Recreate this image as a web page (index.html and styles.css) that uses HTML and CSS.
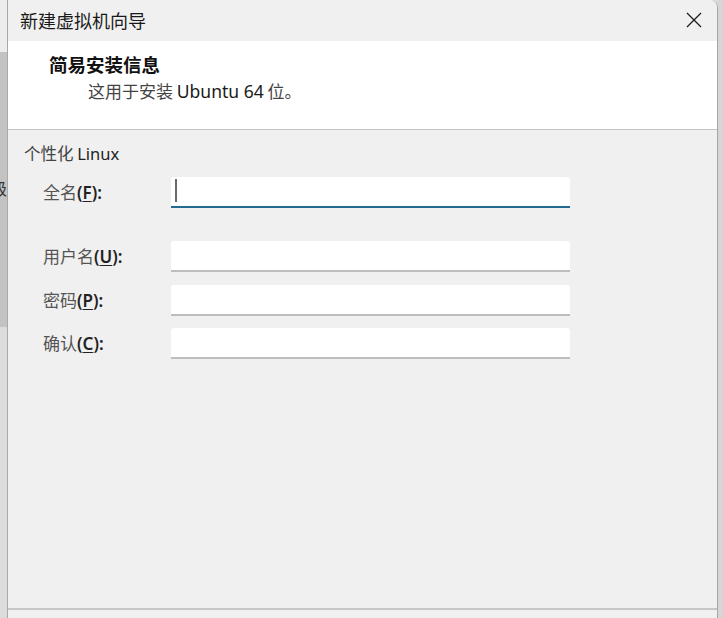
FILE: index.html
```html
<!DOCTYPE html>
<html lang="zh-CN">
<head>
<meta charset="utf-8">
<title>新建虚拟机向导</title>
<link rel="stylesheet" href="styles.css">
</head>
<body>
<div class="screen">
  <div class="behind-left">
    <div class="bl-top"></div>
    <div class="bl-mid"><span class="bl-glyph">级</span></div>
    <div class="bl-bottom"></div>
  </div>
  <div class="dialog">
    <div class="titlebar">
      <span class="title">新建虚拟机向导</span>
      <svg class="close" width="16" height="16" viewBox="0 0 16 16" aria-label="关闭">
        <path d="M1 1 L15 15 M15 1 L1 15" stroke="#1c1c1c" stroke-width="1.3" fill="none"/>
      </svg>
    </div>
    <div class="header">
      <div class="header-title">简易安装信息</div>
      <div class="header-sub">这用于安装 <span class="latin">Ubuntu 64</span> 位。</div>
    </div>
    <div class="body">
      <div class="section-title">个性化 <span class="latin">Linux</span></div>
      <div class="form">
        <div class="row row-first">
          <span class="label">全名<b>(<u>F</u>):</b></span>
          <div class="field focused"><span class="caret"></span></div>
        </div>
        <div class="row">
          <span class="label">用户名<b>(<u>U</u>):</b></span>
          <div class="field"></div>
        </div>
        <div class="row">
          <span class="label">密码<b>(<u>P</u>):</b></span>
          <div class="field"></div>
        </div>
        <div class="row">
          <span class="label">确认<b>(<u>C</u>):</b></span>
          <div class="field"></div>
        </div>
      </div>
    </div>
    <div class="footer"></div>
  </div>
  <div class="behind-right"></div>
</div>
</body>
</html>
```
FILE: styles.css
```css
html, body {
  margin: 0;
  padding: 0;
}
body {
  width: 723px;
  height: 618px;
  overflow: hidden;
  background: #dadada;
  font-family: "Noto Sans", "Noto Sans CJK SC", sans-serif;
  color: #1a1a1a;
}
.screen {
  display: flex;
  height: 618px;
}
.behind-left {
  width: 7px;
  display: flex;
  flex-direction: column;
  overflow: hidden;
  border-right: 1px solid #a9a9a9;
}
.bl-top {
  height: 52px;
  background: #ececec;
}
.bl-mid {
  height: 275px;
  background: #c3c3c3;
  position: relative;
}
.bl-glyph {
  position: absolute;
  top: 126px;
  right: 0;
  font-family: "Noto Sans CJK SC", sans-serif;
  font-size: 16px;
  line-height: 20px;
  color: #333;
}
.bl-bottom {
  flex: 1;
  background: #dcdcdc;
}
.dialog {
  width: 709px;
  display: flex;
  flex-direction: column;
  background: #f0f0f0;
  border-right: 1px solid #a6a6a6;
  border-top-right-radius: 8px;
  overflow: hidden;
}
.behind-right {
  flex: 1;
  background: #d6d6d6;
}
.titlebar {
  height: 41px;
  display: flex;
  align-items: center;
  justify-content: space-between;
  padding: 0 15px 0 12px;
  background: #f0f0f0;
}
.title {
  font-family: "Noto Sans CJK SC", sans-serif;
  font-size: 18px;
  color: #1a1a1a;
  line-height: 41px;
}
.close {
  display: block;
  margin-top: -2px;
}
.header {
  height: 89px;
  box-sizing: border-box;
  background: #ffffff;
  border-bottom: 1px solid #c4c4c4;
  padding: 11px 0 0 41px;
}
.header-title {
  font-family: "Noto Sans CJK SC", sans-serif;
  font-weight: 700;
  font-size: 18.5px;
  line-height: 25px;
  color: #111;
}
.header-sub {
  margin-top: 2px;
  padding-left: 39px;
  font-family: "Noto Sans CJK SC", sans-serif;
  font-size: 17px;
  line-height: 24px;
  color: #444;
}
.latin {
  font-family: "Noto Sans", sans-serif;
  font-size: 17.5px;
  color: #1a1a1a;
}
.body {
  flex: 1;
  padding: 12px 0 0 16px;
}
.section-title {
  font-family: "Noto Sans CJK SC", sans-serif;
  font-size: 16.5px;
  line-height: 22px;
  color: #444;
}
.section-title .latin {
  font-size: 16.5px;
  color: #222;
}
.form {
  margin-top: 12px;
  display: flex;
  flex-direction: column;
  gap: 12.5px;
  padding-left: 19px;
}
.row {
  display: flex;
  align-items: center;
  height: 31px;
}
.row-first {
  margin-bottom: 20.5px;
}
.label {
  width: 128px;
  font-family: "Noto Sans CJK SC", sans-serif;
  font-size: 17px;
  color: #555;
  line-height: 22px;
}
.label b {
  font-family: "Noto Sans", sans-serif;
  font-weight: 600;
  color: #222;
}
.label u {
  text-underline-offset: 2px;
}
.field {
  width: 399px;
  height: 31px;
  box-sizing: border-box;
  background: #ffffff;
  border-bottom: 2px solid #bdbdbd;
  border-radius: 3px 3px 0 0;
  position: relative;
}
.field.focused {
  border-bottom-color: #23688f;
}
.caret {
  position: absolute;
  left: 4px;
  top: 2px;
  width: 2px;
  height: 23px;
  background: #6a6a6a;
}
.footer {
  height: 8px;
  border-top: 2px solid #c6c6c6;
  background: #f0f0f0;
}
```
